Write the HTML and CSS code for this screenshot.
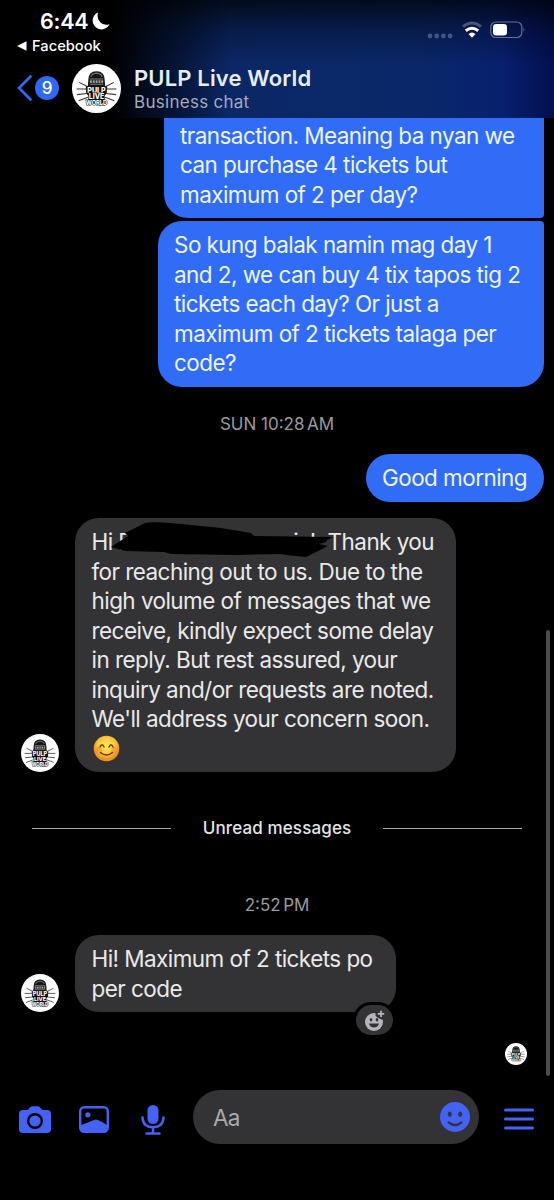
FILE: index.html
```html
<!DOCTYPE html>
<html lang="en">
<head>
<meta charset="utf-8">
<title>PULP Live World</title>
<link rel="stylesheet" href="styles.css">
</head>
<body>
<div class="phone">
  <header class="header">
    <div class="status">
      <div class="clock">6:44
        <svg width="18" height="18" viewBox="0 0 18 18"><path d="M6 .5A8.800 8.800 0 1 0 17.500 12.200Q11.500 14 8 10 4.500 6 6 .5z" fill="#fff"/></svg>
      </div>
      <div class="signals">
        <svg width="26" height="6" viewBox="0 0 26 6" fill="#46557f"><circle cx="3" cy="3" r="2.4"/><circle cx="9.7" cy="3" r="2.4"/><circle cx="16.4" cy="3" r="2.4"/><circle cx="23.1" cy="3" r="2.4"/></svg>
        <svg width="22" height="18" viewBox="0 0 22 18" fill="none" stroke="#fff" stroke-width="3"><path d="M2 5.500Q11-1.500 20 5.500" stroke="#46557f"/><path d="M4.800 9.700Q11 4.800 17.200 9.700"/><path d="M7.500 13.100Q11 9.800 14.500 13.100L11 16.800z" fill="#fff" stroke="none"/></svg>
        <svg width="36" height="18" viewBox="0 0 36 18"><rect x=".8" y="1" width="31" height="15.500" rx="5" fill="none" stroke="#67728f" stroke-width="1.200"/><rect x="3" y="3" width="14" height="11.500" rx="3.200" fill="#fff"/><path d="M33.500 6.500q1.800 2.200 0 4.500z" fill="#67728f"/></svg>
      </div>
    </div>
    <div class="return"><svg width="10" height="10" viewBox="0 0 10 10"><path d="M0 5L9.500.2v9.600z" fill="#fff"/></svg>Facebook</div>
    <div class="titlebar">
      <svg class="back" width="16" height="26" viewBox="0 0 16 26"><path d="M13.500 1.500L2 13l11.500 11.500" fill="none" stroke="#3069f5" stroke-width="2.700" stroke-linecap="round" stroke-linejoin="round"/></svg>
      <span class="count">9</span>
      <svg class="avatar-lg" viewBox="0 0 48 48">
        <g id="logo">
          <circle cx="24" cy="24" r="24" fill="#fff"/>
          <path d="M7 18l8 4M4.500 24.500h10M5 30l9.500-1M6.500 36l9-3.500M41 18l-8 4M43.500 24.500h-10M43 30l-9.500-1M41.500 36l-9-3.500" stroke="#333" stroke-width="1"/>
          <path d="M16 15.500q0-8.500 8-8.500t8 8.500l.5 6 2 .5-.5 7-2 2v6.500q-8 3.500-16 0V31l-2-2-.5-7 2-.5z" fill="#151515"/>
          <path d="M18.500 12.500q1-3 5.500-3.500 4.500.5 5.500 3.500" fill="none" stroke="#777" stroke-width="1.200"/>
          <path d="M17.500 14.700h13M17.500 19.800h13" stroke="#999" stroke-width=".8"/>
          <path d="M17.500 17.200h13" stroke="#999" stroke-width="2.600" stroke-dasharray="2 .8"/>
          <text class="logo-text" x="24" y="28" font-size="7">PULP</text>
          <text class="logo-text" x="24" y="34.500" font-size="6.800">LIVE</text>
          <text class="logo-text" x="24" y="40.300" font-size="5.600">WORLD</text>
        </g>
      </svg>
      <div class="who"><div class="name">PULP Live World</div><div class="kind">Business chat</div></div>
    </div>
  </header>

  <main class="thread">
    <div class="bubble sent cut"><span>transaction. Meaning ba nyan we</span><span>can purchase 4 tickets but</span><span>maximum of 2 per day?</span></div>
    <div class="bubble sent long"><span>So kung balak namin mag day 1</span><span>and 2, we can buy 4 tix tapos tig 2</span><span>tickets each day? Or just a</span><span>maximum of 2 tickets talaga per</span><span>code?</span></div>
    <div class="stamp first">SUN 10:28<i> </i>AM</div>
    <div class="bubble sent short"><span>Good morning</span></div>
    <div class="row reply">
      <svg class="avatar" viewBox="0 0 48 48"><use href="#logo"/></svg>
      <div class="bubble received wide">
        <span class="greeting"><b>Hi R</b><b class="tail">i &nbsp;!</b><b>Thank you</b></span>
        <span>for reaching out to us. Due to the</span><span>high volume of messages that we</span><span>receive, kindly expect some delay</span><span>in reply. But rest assured, your</span><span>inquiry and/or requests are noted.</span><span>We'll address your concern soon.</span>
        <span class="emoji"><svg width="27" height="27" viewBox="0 0 27 27" role="img" aria-label="😊"><defs><radialGradient id="face" cy=".4"><stop offset=".2" stop-color="#ffe055"/><stop offset=".7" stop-color="#fcc736"/><stop offset="1" stop-color="#ec9322"/></radialGradient></defs><circle cx="13.500" cy="13.500" r="12.800" fill="url(#face)"/><circle cx="5.500" cy="15.500" r="3.500" fill="#f58a35" opacity=".55"/><circle cx="21.500" cy="15.500" r="3.500" fill="#f58a35" opacity=".55"/><path d="M7 12q2-4.400 4 0M16 12q2-4.400 4 0M7.500 17.500q6 5 12 0" fill="none" stroke="#67390d" stroke-width="1.500" stroke-linecap="round"/></svg></span>
        <svg class="scribble" width="230" height="42" viewBox="0 0 230 42"><path d="M0 29L6 25 17 18 14 15 34 5Q42 3 70 6L110 10 140 15 143 18 222 19 216 22 215 24 208 26 217 28 213 30 195 39 175 37 170 36 125 37 60 36 53 34 14 33z" fill="#000"/></svg>
      </div>
    </div>
    <div class="unread"><i></i><span>Unread messages</span><i></i></div>
    <div class="stamp second">2:52<i> </i>PM</div>
    <div class="row last">
      <svg class="avatar" viewBox="0 0 48 48"><use href="#logo"/></svg>
      <div class="bubble received narrow"><span>Hi! Maximum of 2 tickets po</span><span>per code</span>
        <div class="react"><svg width="22" height="23" viewBox="0 0 22 23"><circle cx="10" cy="13" r="9" fill="#b5b6bd"/><path d="M11.500 2.500h4v-3H22v11h-4.500q-4-1-6-4z" fill="#333335"/><path d="M17 1.700v6.400M13.800 4.900h6.400" stroke="#b5b6bd" stroke-width="1.800"/><ellipse cx="7" cy="10.800" rx="1.300" ry="1.700" fill="#333335"/><ellipse cx="13" cy="10.800" rx="1.300" ry="1.700" fill="#333335"/><path d="M5 14.500h10q-1 4-5 4t-5-4z" fill="#333335"/></svg></div>
      </div>
    </div>
    <svg class="seen" viewBox="0 0 48 48"><use href="#logo"/></svg>
    <div class="scrollbar"></div>
  </main>

  <footer class="composer">
    <svg class="camera" width="32" height="27" viewBox="0 0 32 27"><path d="M4 4h4.500L11 1.400Q12 .3 14 .3h4q2 0 3 1.100L23.500 4H28q4 0 4 4v15q0 4-4 4H4q-4 0-4-4V8q0-4 4-4z" fill="#4562f6"/><circle cx="16" cy="15" r="6.800" fill="#4562f6" stroke="#000" stroke-width="2.400"/></svg>
    <svg class="photo" width="30" height="27" viewBox="0 0 30 27"><rect x="1.200" y="1.200" width="27.600" height="24.600" rx="4" fill="none" stroke="#4562f6" stroke-width="2.400"/><circle cx="8.800" cy="8.800" r="2.600" fill="#4562f6"/><path d="M1.500 19.200Q9 16.500 15 14q2-.8 4 0 5 2.300 9.500 5.200V23q0 3-3 3h-21q-3 0-3-3z" fill="#4562f6"/></svg>
    <svg class="mic" width="24" height="30" viewBox="0 0 24 30" fill="none" stroke="#4562f6" stroke-width="2.500" stroke-linecap="round"><rect x="6.500" y="0" width="11" height="19" rx="5.500" fill="#4562f6" stroke="none"/><path d="M1.500 12.500Q2 22.200 12 22.200t10.500-9.700M12 22.500v5.500M5.500 28.500h13"/></svg>
    <div class="field"><span>Aa</span><svg width="30" height="30" viewBox="0 0 30 30"><circle cx="15" cy="15" r="15" fill="#4562f6"/><ellipse cx="9.800" cy="12.300" rx="2" ry="2.700" fill="#333335"/><ellipse cx="20.200" cy="12.300" rx="2" ry="2.700" fill="#333335"/><path d="M8.700 20.500q6.300 5 12.600 0" fill="none" stroke="#333335" stroke-width="2.300" stroke-linecap="round"/></svg></div>
    <svg class="menu" width="30" height="23" viewBox="0 0 30 23"><path d="M1.500 1.900h27M1.500 11h27M1.500 20.100h27" stroke="#4562f6" stroke-width="3" stroke-linecap="round"/></svg>
  </footer>
</div>
</body>
</html>
```

FILE: styles.css
```css
* { box-sizing: border-box; }
body { margin: 0; background: #000; font-family: Inter, "Liberation Sans", sans-serif; }
svg { display: block; flex: none; }
.logo-text { fill: #fff; stroke: #111; stroke-width: 1px; paint-order: stroke; font-weight: 800; text-anchor: middle; font-family: Inter, sans-serif; letter-spacing: 0; }
.phone { width: 554px; height: 1200px; overflow: hidden; display: flex; flex-direction: column; }

.header {
  height: 118px; flex: none; color: #fff;
  background:
    linear-gradient(to bottom, rgba(0,0,0,.72), rgba(0,0,0,.3) 25%, rgba(0,0,0,0) 55%),
    linear-gradient(to right, #000 110px, transparent 230px, transparent 500px, rgba(0,4,45,.5)),
    linear-gradient(to right, #06205d, #0b2766 42%, #0a2869 75%, #061c73);
}
.status { display: flex; justify-content: space-between; height: 36px; padding: 9px 28px 0 40px; }
.clock { display: flex; align-items: center; gap: 4px; height: 24px; font-size: 21.500px; font-weight: 600; letter-spacing: -.2px; }
.signals { display: flex; align-items: center; height: 18px; margin-top: 12px; }
.signals svg:nth-child(1) { margin: 11px 8px 0 0; }
.signals svg:nth-child(2) { margin-right: 7px; }
.return { display: flex; align-items: center; gap: 5px; height: 20px; padding-left: 17px; font-size: 14.700px; font-weight: 500; }
.titlebar { display: flex; align-items: center; height: 64px; padding-left: 17px; }
.count { width: 24px; height: 24px; margin: 0 13px 0 2px; border-radius: 50%; background: #3069f5; font-size: 17px; font-weight: 500; line-height: 24px; text-align: center; }
.avatar-lg { width: 49px; height: 49px; margin-right: 13px; }
.who { padding-top: 2px; }
.name { font-size: 22px; font-weight: 600; line-height: 27px; letter-spacing: .15px; color: #e5edfb; white-space: nowrap; }
.kind { font-size: 17px; line-height: 21px; letter-spacing: .28px; color: #a3abbd; }

.thread { position: relative; flex: none; height: 972px; display: flex; flex-direction: column; }
.bubble { font-size: 22.500px; line-height: 29.500px; letter-spacing: -.56px; padding: 9px 16.500px; border-radius: 24px; }
.bubble > span { display: block; white-space: nowrap; }
.sent { align-self: flex-end; margin-right: 10.500px; background: #316cf7; color: #eef5ff; }
.cut { width: 379.500px; height: 100px; padding: 2.500px 16px 0; border-radius: 0 0 4px 24px; }
.long { width: 386px; height: 166px; margin-top: 3px; border-radius: 24px 4px 24px 24px; }
.stamp { height: 20px; text-align: center; font-size: 17px; line-height: 20px; color: #9a9a9e; }
.stamp i { font-size: 9px; line-height: 0; }
.first { margin-top: 27px; }
.short { width: 178px; height: 48px; margin-top: 20px; }
.row { display: flex; align-items: flex-end; padding-left: 21px; }
.avatar { width: 38px; height: 38px; margin-right: 16px; }
.received { position: relative; background: #333335; color: #e9e9eb; }
.reply { margin-top: 16px; }
.wide { width: 381px; height: 254px; }
.greeting b { display: inline-block; font-weight: inherit; }
.greeting .tail { margin-left: 161px; margin-right: 12px; }
.emoji { padding: 1px 0 0 1px; }
.scribble { position: absolute; left: 36px; top: 0; }
.unread { display: flex; align-items: center; gap: 32px; height: 24px; margin: 44px 32px 0; }
.unread i { flex: 1; height: 1px; background: #a6a6a8; }
.unread span { font-size: 17px; font-weight: 500; letter-spacing: .13px; color: #e4e4e6; white-space: nowrap; }
.second { margin-top: 55px; }
.last { margin-top: 20px; }
.narrow { width: 321px; height: 77px; }
.react { position: absolute; right: 0; bottom: -26px; width: 43px; height: 36px; display: flex; justify-content: center; align-items: center; background: #333335; border: 3px solid #000; border-radius: 18px; }
.seen { width: 22px; height: 22px; margin: 31px 0 0 505px; }
.scrollbar { position: absolute; left: 545.500px; top: 512px; width: 4px; height: 446px; border-radius: 2px; background: #4b4b4d; }

.composer { display: flex; align-items: flex-start; padding-left: 19px; }
.camera { margin: 16px 28px 0 0; }
.photo { margin: 16px 32px 0 0; }
.mic { margin: 15px 28px 0 0; }
.field { display: flex; justify-content: space-between; align-items: center; width: 286px; height: 54px; padding: 0 9px 0 20px; border-radius: 27px; background: #333335; color: #aaaaad; font-size: 22.500px; letter-spacing: -.8px; }
.menu { margin: 18px 0 0 25px; }
```
